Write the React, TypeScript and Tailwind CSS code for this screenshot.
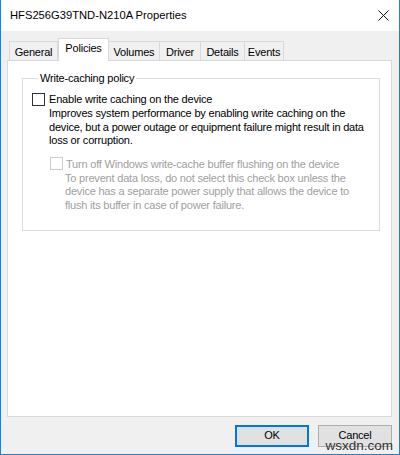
const font = { fontFamily: '"Liberation Sans", Arial, sans-serif' };

function Tab({ label, w, active }: { label: string; w: string; active?: boolean }) {
  if (active) {
    return (
      <div className={w + " h-[23px] -mb-px bg-white border border-b-0 border-[#d9d9d9] flex justify-center pt-[3px] relative z-10"}>
        {label}
      </div>
    );
  }
  return (
    <div className={w + " h-[19px] bg-[#f0f0f0] border-t border-r border-[#d9d9d9] first:border-l flex justify-center pt-[4px]"}>
      {label}
    </div>
  );
}

function Box({ disabled }: { disabled?: boolean }) {
  return (
    <span
      className={
        "w-[13px] h-[13px] bg-white border shrink-0 " +
        (disabled ? "border-[#cccccc]" : "border-[#333333]")
      }
    />
  );
}

export default function App() {
  return (
    <div
      className="w-[400px] h-[455px] flex flex-col bg-[#f0f0f0] border border-t-0 border-[#1883d7] text-[11px] tracking-[-0.2px] text-black overflow-hidden relative whitespace-nowrap"
      style={font}
    >
      {/* Title bar */}
      <div className="h-[31px] bg-white flex items-center justify-between pl-[9px] pr-[9px] shrink-0">
        <span className="text-[11.2px] tracking-normal">HFS256G39TND-N210A Properties</span>
        <svg width="11" height="11" viewBox="0 0 11 11" className="mr-[1px]">
          <path d="M0.5 0.5 L10.5 10.5 M10.5 0.5 L0.5 10.5" stroke="#111" strokeWidth="1" />
        </svg>
      </div>

      {/* Body */}
      <div className="flex-1 flex flex-col pl-[6px] pr-[7px] pt-[6px]">
        <div className="flex items-end h-[23px] pl-[2px] leading-[13px]">
          <Tab label="General" w="w-[49px]" />
          <Tab label="Policies" w="w-[51px]" active />
          <Tab label="Volumes" w="w-[51px]" />
          <Tab label="Driver" w="w-[41px]" />
          <Tab label="Details" w="w-[44px]" />
          <Tab label="Events" w="w-[39px]" />
        </div>

        <div className="h-[357px] bg-white border border-[#d9d9d9] pt-[10px] pl-[14px] pr-[11px]">
          <fieldset className="border border-[#dcdcdc] h-[160px] pl-[9px]">
            <legend className="ml-[6px] px-[2px] leading-[14px]">Write-caching policy</legend>

            <div className="flex items-center gap-[4px] mt-[7px]">
              <Box />
              <span className="leading-[14px]">Enable write caching on the device</span>
            </div>
            <p className="pl-[17px] mt-[1px] leading-[13.5px]">
              Improves system performance by enabling write caching on the
              <br />
              device, but a power outage or equipment failure might result in data
              <br />
              loss or corruption.
            </p>

            <div className="pl-[18px] text-[#a0a0a0]">
              <div className="flex items-center gap-[3px] mt-[9px]">
                <Box disabled />
                <span className="leading-[14px]">Turn off Windows write-cache buffer flushing on the device</span>
              </div>
              <p className="pl-[15px] mt-[1px] leading-[13.5px]">
                To prevent data loss, do not select this check box unless the
                <br />
                device has a separate power supply that allows the device to
                <br />
                flush its buffer in case of power failure.
              </p>
            </div>
          </fieldset>
        </div>

        {/* Buttons */}
        <div className="flex justify-end gap-[9px] mt-[8px]">
          <button className="w-[74px] h-[22px] bg-[#e1e1e1] border-2 border-[#0078d7] leading-none pb-[2px]">OK</button>
          <button className="w-[74px] h-[22px] bg-[#e1e1e1] border border-[#adadad] leading-none pb-[2px]">Cancel</button>
        </div>
      </div>

      {/* Watermark */}
      <span
        className="absolute right-[6px] bottom-[2px] text-[13.5px] tracking-normal text-[#333333] leading-none"
        style={{ fontFamily: '"Liberation Sans", sans-serif' }}
      >
        wsxdn.com
      </span>
    </div>
  );
}
